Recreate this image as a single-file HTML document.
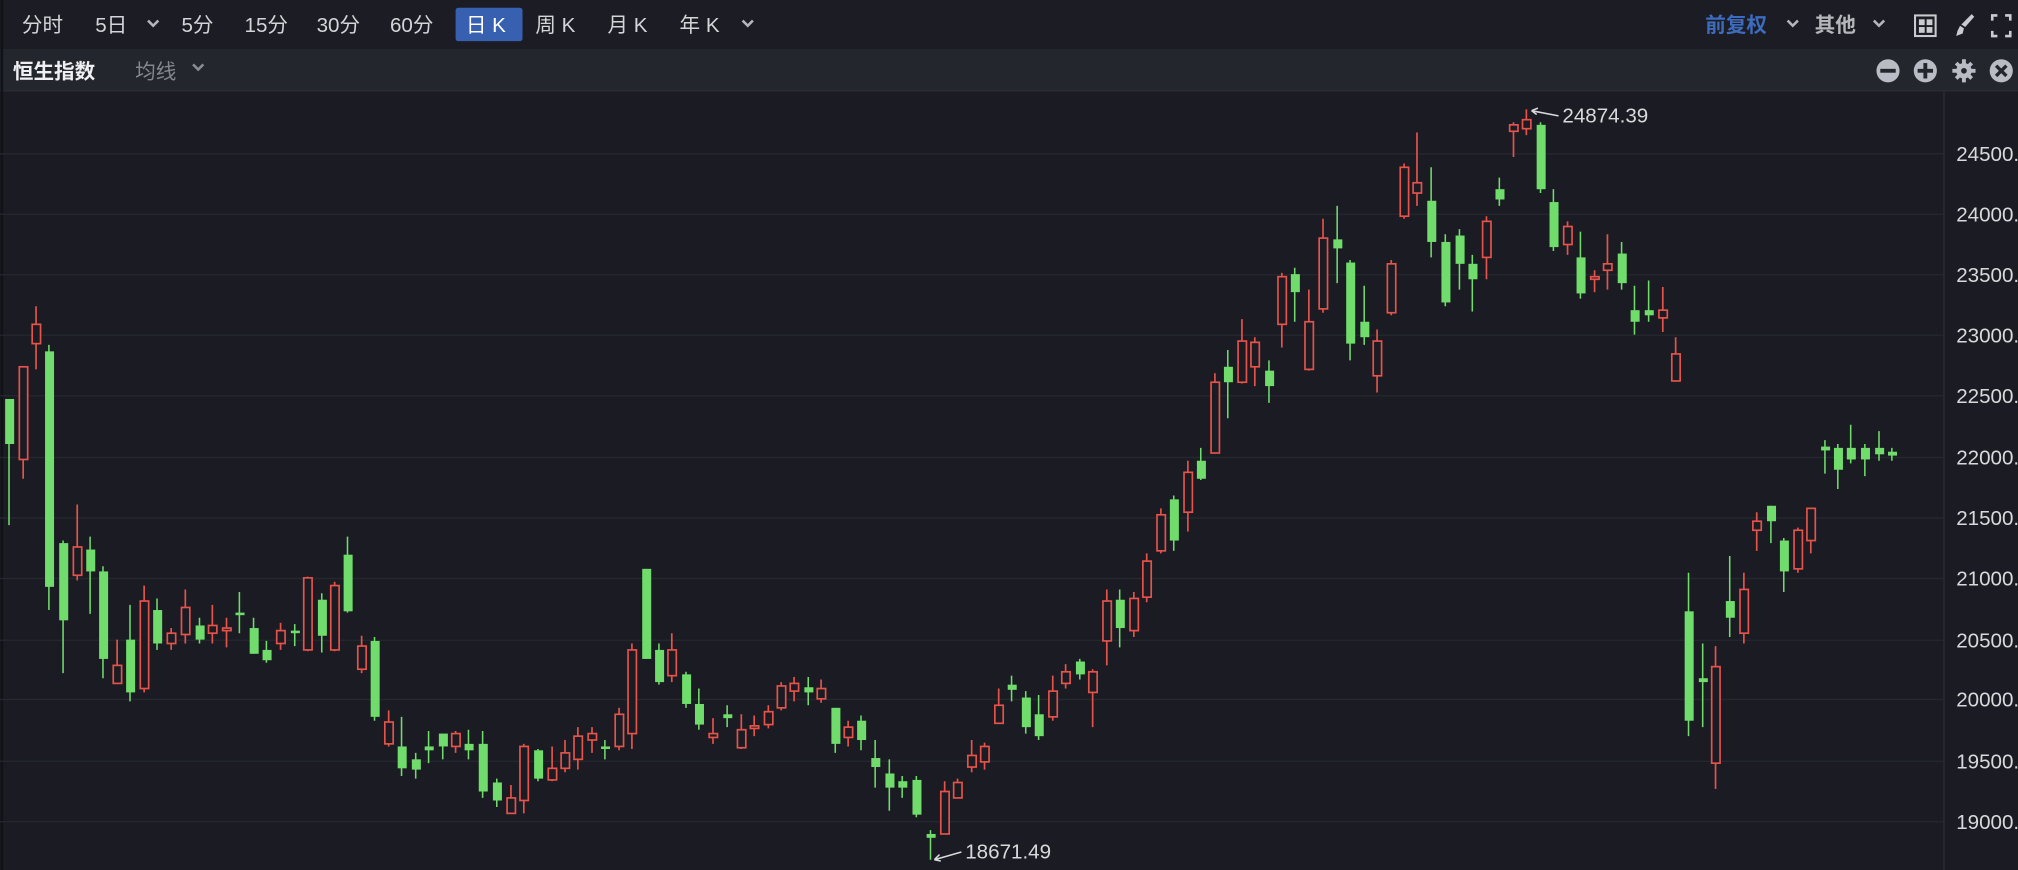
<!DOCTYPE html>
<html><head><meta charset="utf-8"><style>
html,body{margin:0;padding:0;background:#1b1c23;}
svg{display:block}
text{font-family:"Liberation Sans","Noto Sans CJK SC",sans-serif}
</style></head><body>
<svg width="2018" height="870" viewBox="0 0 1568 676" xmlns="http://www.w3.org/2000/svg">
<rect width="1568" height="676" fill="#1b1c23"/>
<rect width="1568" height="38" fill="#1c1d24"/>
<rect y="38" width="1568" height="32" fill="#24262e"/>
<line x1="0" y1="70.5" x2="1568" y2="70.5" stroke="#2c2e36"/>
<line x1="1.5" y1="0" x2="1.5" y2="676" stroke="#111217" stroke-width="2"/>
<!-- top tabs -->
<g font-size="16" fill="#d4d5d9">
<text x="17" y="25">分时</text>
<text x="74" y="25">5日</text>
<text x="141" y="25">5分</text>
<text x="190" y="25">15分</text>
<text x="246" y="25">30分</text>
<text x="303" y="25">60分</text>
<rect x="354" y="6" width="52" height="26" rx="2" fill="#3760b0"/>
<text x="362" y="25" fill="#fff">日 K</text>
<text x="416" y="25">周 K</text>
<text x="472" y="25">月 K</text>
<text x="528" y="25">年 K</text>
<text x="1325" y="25" fill="#3d6bbd" font-weight="bold">前复权</text>
<text x="1410" y="25" fill="#b4b6bb" font-weight="bold">其他</text>
</g>
<g fill="none" stroke="#b4b6bb" stroke-width="2">
<path d="M115 16l4 4 4-4"/><path d="M577 16l4 4 4-4"/><path d="M1389 16l4 4 4-4"/><path d="M1456 16l4 4 4-4"/>
<path d="M150 50l4 4 4-4" stroke="#8a8c93"/>
</g>
<!-- top right icons -->
<g fill="#c9cbd0">
<rect x="1488" y="12" width="16" height="16" fill="none" stroke="#c9cbd0" stroke-width="1.6"/>
<rect x="1491" y="15" width="4.5" height="4.5"/><rect x="1497" y="15" width="4.5" height="4.5"/>
<rect x="1491" y="21" width="4.5" height="4.5"/><rect x="1497" y="21" width="4.5" height="4.5"/>
<path d="M1532 11l2 2-7 8-3-2z"/><path d="M1523 20l3 2-1 4-5 2 1-4z"/>
<path d="M1547 11h5v2h-3v3h-2zM1558 11h5v5h-2v-3h-3zM1547 29h5v-2h-3v-3h-2zM1563 29h-5v-2h3v-3h2z"/>
</g>
<text x="10" y="61" font-size="16" fill="#f0f0f2" font-weight="bold">恒生指数</text>
<text x="105" y="61" font-size="16" fill="#85878e">均线</text>
<!-- second row icons -->
<g>
<circle cx="1467" cy="55" r="9" fill="#b9bcc4"/><rect x="1461" y="53.5" width="12" height="3" fill="#24262e"/>
<circle cx="1496" cy="55" r="9" fill="#b9bcc4"/><rect x="1490" y="53.5" width="12" height="3" fill="#24262e"/><rect x="1494.5" y="49" width="3" height="12" fill="#24262e"/>
<circle cx="1526" cy="55" r="6" fill="#b9bcc4"/>
<g stroke="#b9bcc4" stroke-width="3"><path d="M1526 46v18M1517 55h18M1520 49l12 12M1532 49l-12 12"/></g>
<circle cx="1526" cy="55" r="2.2" fill="#24262e"/>
<circle cx="1555" cy="55" r="9" fill="#b9bcc4"/><path d="M1551 51l8 8M1559 51l-8 8" stroke="#24262e" stroke-width="2.6"/>
</g>
<!-- grid -->
<g stroke="#262830" stroke-width="1">
<path d="M0 119.5H1510M0 166.5H1510M0 213.5H1510M0 260.5H1510M0 307.5H1510M0 355.5H1510M0 402.5H1510M0 449.5H1510M0 497.5H1510M0 543.5H1510M0 591.5H1510M0 638.5H1510"/>
</g>
<line x1="1510.5" y1="71" x2="1510.5" y2="676" stroke="#2c2e36"/>
<g font-size="16" fill="#d8d9dc">
<text x="1520" y="125">24500.0</text><text x="1520" y="172">24000.0</text><text x="1520" y="219">23500.0</text>
<text x="1520" y="266">23000.0</text><text x="1520" y="313">22500.0</text><text x="1520" y="361">22000.0</text>
<text x="1520" y="408">21500.0</text><text x="1520" y="455">21000.0</text><text x="1520" y="503">20500.0</text>
<text x="1520" y="549">20000.0</text><text x="1520" y="597">19500.0</text><text x="1520" y="644">19000.0</text>
<text x="1214" y="95">24874.39</text><text x="750" y="667">18671.49</text>
</g>
<g stroke="#d8d9dc" stroke-width="1.2" fill="none">
<path d="M1211 90L1190 86M1190 86l5 -2M1190 86l4 3"/>
<path d="M747 662L726 668M726 668l5 1M726 668l4 -4"/>
</g>
<!-- green candles -->
<g stroke="#6fdc6b" fill="#6fdc6b" stroke-width="1.2">
<path d="M7 310V408M38 268V474M49 420V523M70 417V477M80 440V527M101 470V545M122 465V505M155 480V500M186 460V492M197 480V508M207 498V515M229 485V502M250 461V507M270 417V476M291 495V560M312 557V603M323 585V605M333 568V593M344 570V590M364 567V590M375 568V620M386 605V627M418 582V607M470 575V590M502 442V512M512 500V532M533 522V550M543 535V567M565 548V565M628 526V548M649 550V585M669 556V583M680 575V612M691 590V630M701 603V620M712 603V635M723 645V668M786 525V545M797 537V570M807 540V575M839 512V528M870 458V503M912 385V428M933 348V373M954 272V325M986 280V313M1006 208V250M1039 160V220M1049 202V280M1060 222V268M1112 130V200M1123 182V238M1134 178V225M1144 198V242M1165 138V160M1197 95V150M1207 147V195M1228 180V232M1260 188V225M1270 222V260M1281 218V250M1312 445V572M1323 500V565M1344 432V495M1376 393V422M1386 418V460M1418 342V368M1428 345V380M1438 330V360M1449 345V370M1460 335V358M1470 348V358"/>
<g stroke="none">
<rect x="4" y="310" width="7" height="35"/><rect x="35" y="273" width="7" height="183"/><rect x="46" y="422" width="7" height="60"/>
<rect x="67" y="427" width="7" height="17"/><rect x="77" y="444" width="7" height="68"/><rect x="98" y="497" width="7" height="41"/>
<rect x="119" y="474" width="7" height="26"/><rect x="152" y="486" width="7" height="11"/><rect x="183" y="476" width="7" height="2"/>
<rect x="194" y="488" width="7" height="20"/><rect x="204" y="505" width="7" height="8"/><rect x="226" y="490" width="7" height="2"/>
<rect x="247" y="466" width="7" height="28"/><rect x="267" y="431" width="7" height="44"/><rect x="288" y="498" width="7" height="59"/>
<rect x="309" y="580" width="7" height="17"/><rect x="320" y="590" width="7" height="8"/><rect x="330" y="580" width="7" height="3"/>
<rect x="341" y="570" width="7" height="10"/><rect x="361" y="578" width="7" height="5"/><rect x="372" y="578" width="7" height="37"/>
<rect x="383" y="608" width="7" height="14"/><rect x="415" y="583" width="7" height="22"/><rect x="467" y="580" width="7" height="2"/>
<rect x="499" y="442" width="7" height="70"/><rect x="509" y="505" width="7" height="25"/><rect x="530" y="524" width="7" height="23"/>
<rect x="540" y="547" width="7" height="16"/><rect x="562" y="555" width="7" height="3"/><rect x="625" y="534" width="7" height="4"/>
<rect x="646" y="550" width="7" height="28"/><rect x="666" y="560" width="7" height="15"/><rect x="677" y="589" width="7" height="7"/>
<rect x="688" y="601" width="7" height="11"/><rect x="698" y="607" width="7" height="5"/><rect x="709" y="606" width="7" height="27"/>
<rect x="720" y="648" width="7" height="3"/><rect x="783" y="532" width="7" height="4"/><rect x="794" y="542" width="7" height="23"/>
<rect x="804" y="555" width="7" height="17"/><rect x="836" y="514" width="7" height="10"/><rect x="867" y="466" width="7" height="22"/>
<rect x="909" y="388" width="7" height="32"/><rect x="930" y="358" width="7" height="14"/><rect x="951" y="285" width="7" height="12"/>
<rect x="983" y="288" width="7" height="12"/><rect x="1003" y="213" width="7" height="14"/><rect x="1036" y="186" width="7" height="7"/>
<rect x="1046" y="204" width="7" height="63"/><rect x="1057" y="250" width="7" height="12"/><rect x="1109" y="156" width="7" height="32"/>
<rect x="1120" y="188" width="7" height="47"/><rect x="1131" y="183" width="7" height="22"/><rect x="1141" y="205" width="7" height="12"/>
<rect x="1162" y="147" width="7" height="8"/><rect x="1194" y="97" width="7" height="50"/><rect x="1204" y="157" width="7" height="35"/>
<rect x="1225" y="200" width="7" height="28"/><rect x="1257" y="197" width="7" height="23"/><rect x="1267" y="241" width="7" height="9"/>
<rect x="1278" y="241" width="7" height="4"/><rect x="1309" y="475" width="7" height="85"/><rect x="1320" y="527" width="7" height="3"/>
<rect x="1341" y="467" width="7" height="13"/><rect x="1373" y="393" width="7" height="12"/><rect x="1383" y="420" width="7" height="24"/>
<rect x="1415" y="347" width="7" height="3"/><rect x="1425" y="348" width="7" height="17"/><rect x="1435" y="348" width="7" height="9"/>
<rect x="1446" y="348" width="7" height="9"/><rect x="1457" y="348" width="7" height="5"/><rect x="1467" y="351" width="7" height="3"/>
</g></g>
<!-- red candles -->
<g stroke="#e5534b" stroke-width="1.3" fill="#1b1c23">
<path d="M18 285V372M28 238V287M60 392V451M91 497V531M112 455V538M133 488V505M144 458V500M165 470V500M176 480V503M218 484V505M239 448V506M260 452V506M281 494V523M302 552V580M354 568V585M397 610V632M407 578V632M429 580V607M439 575V600M449 565V598M460 565V585M481 550V583M491 500V582M522 492V530M554 558V578M576 555V582M586 556V572M597 548V566M607 530V552M617 526V545M638 528V546M659 560V580M734 607V648M744 605V620M755 575V600M765 577V598M776 535V562M818 525V560M828 516V535M849 520V565M860 458V517M881 460V495M891 430V468M902 395V430M923 358V413M944 290V352M965 248V298M975 262V300M996 212V270M1017 225V288M1028 170V243M1070 256V305M1081 202V245M1091 127V170M1101 103V160M1155 168V217M1176 95V122M1186 85V105M1218 172V198M1239 210V227M1249 182V225M1292 223V258M1302 262V296M1333 502V613M1355 445V500M1365 398V428M1397 410V445M1407 395V430"/>
<rect x="15" y="285" width="6.5" height="72"/><rect x="25" y="252" width="6.5" height="15"/><rect x="57" y="425" width="6.5" height="22"/>
<rect x="88" y="517" width="6.5" height="14"/><rect x="109" y="467" width="6.5" height="68"/><rect x="130" y="492" width="6.5" height="8"/>
<rect x="141" y="472" width="6.5" height="21"/><rect x="162" y="486" width="6.5" height="6"/><rect x="173" y="488" width="6.5" height="2"/>
<rect x="215" y="490" width="6.5" height="10"/><rect x="236" y="449" width="6.5" height="56"/><rect x="257" y="455" width="6.5" height="50"/>
<rect x="278" y="502" width="6.5" height="18"/><rect x="299" y="561" width="6.5" height="17"/><rect x="351" y="570" width="6.5" height="10"/>
<rect x="394" y="620" width="6.5" height="12"/><rect x="404" y="580" width="6.5" height="42"/><rect x="426" y="597" width="6.5" height="9"/>
<rect x="436" y="585" width="6.5" height="12"/><rect x="446" y="572" width="6.5" height="18"/><rect x="457" y="570" width="6.5" height="5"/>
<rect x="478" y="555" width="6.5" height="25"/><rect x="488" y="505" width="6.5" height="65"/><rect x="519" y="505" width="6.5" height="20"/>
<rect x="551" y="570" width="6.5" height="3"/><rect x="573" y="567" width="6.5" height="14"/><rect x="583" y="564" width="6.5" height="2"/>
<rect x="594" y="553" width="6.5" height="10"/><rect x="604" y="533" width="6.5" height="17"/><rect x="614" y="531" width="6.5" height="6"/>
<rect x="635" y="535" width="6.5" height="8"/><rect x="656" y="565" width="6.5" height="8"/><rect x="731" y="615" width="6.5" height="33"/>
<rect x="741" y="608" width="6.5" height="12"/><rect x="752" y="587" width="6.5" height="9"/><rect x="762" y="580" width="6.5" height="12"/>
<rect x="773" y="548" width="6.5" height="14"/><rect x="815" y="537" width="6.5" height="20"/><rect x="825" y="522" width="6.5" height="9"/>
<rect x="846" y="522" width="6.5" height="16"/><rect x="857" y="467" width="6.5" height="31"/><rect x="878" y="465" width="6.5" height="25"/>
<rect x="888" y="436" width="6.5" height="28"/><rect x="899" y="400" width="6.5" height="28"/><rect x="920" y="367" width="6.5" height="31"/>
<rect x="941" y="297" width="6.5" height="55"/><rect x="962" y="265" width="6.5" height="32"/><rect x="972" y="266" width="6.5" height="19"/>
<rect x="993" y="215" width="6.5" height="37"/><rect x="1014" y="250" width="6.5" height="37"/><rect x="1025" y="185" width="6.5" height="55"/>
<rect x="1067" y="265" width="6.5" height="27"/><rect x="1078" y="205" width="6.5" height="38"/><rect x="1088" y="130" width="6.5" height="38"/>
<rect x="1098" y="142" width="6.5" height="8"/><rect x="1152" y="172" width="6.5" height="28"/><rect x="1173" y="97" width="6.5" height="5"/>
<rect x="1183" y="93" width="6.5" height="7"/><rect x="1215" y="176" width="6.5" height="14"/><rect x="1236" y="215" width="6.5" height="2"/>
<rect x="1246" y="205" width="6.5" height="5"/><rect x="1289" y="241" width="6.5" height="6"/><rect x="1299" y="275" width="6.5" height="21"/>
<rect x="1330" y="518" width="6.5" height="75"/><rect x="1352" y="458" width="6.5" height="34"/><rect x="1362" y="405" width="6.5" height="7"/>
<rect x="1394" y="412" width="6.5" height="30"/><rect x="1404" y="395" width="6.5" height="25"/>
</g>
</svg>
</body></html>
